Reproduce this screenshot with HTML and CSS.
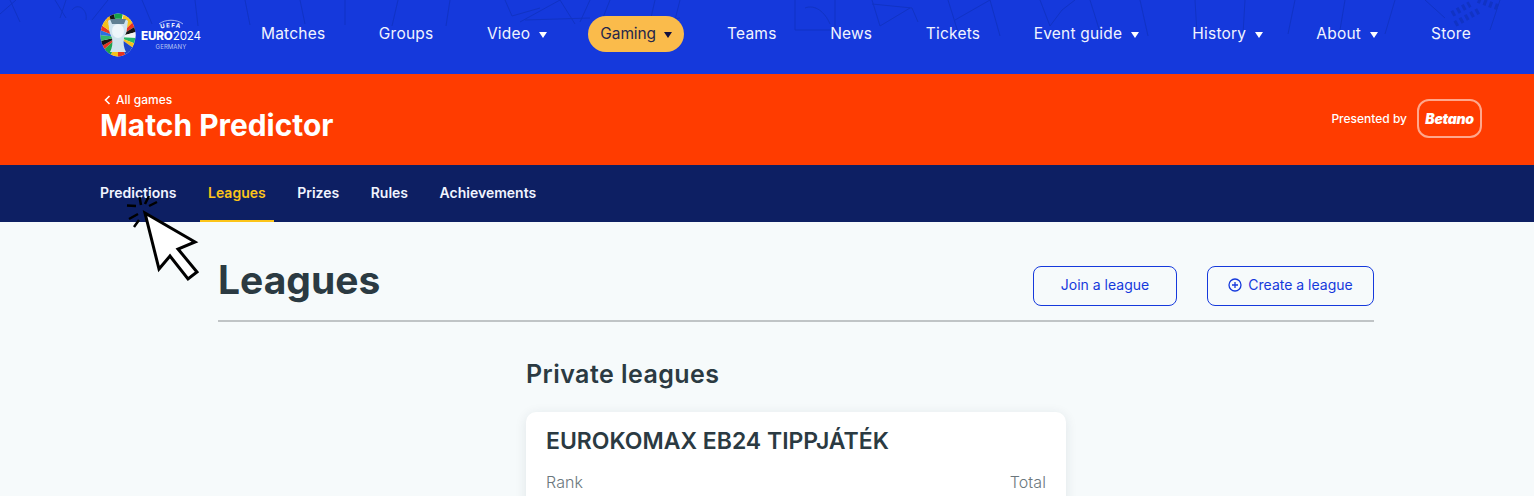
FILE: index.html
```html
<!DOCTYPE html>
<html lang="en">
<head>
<meta charset="utf-8">
<title>Leagues - Match Predictor</title>
<link rel="stylesheet" href="styles.css">
</head>
<body>
<header class="topbar">
  <svg class="pattern" width="1534" height="74" viewBox="0 0 1534 74" fill="none" stroke="#1133c4" stroke-width="1" aria-hidden="true">
    <path d="M0 14 16 0M10 0 20 22M55 0 66 18M66 0 60 18M72 10C78 2 88 10 86 20M108 0 92 20M142 0 152 24M195 0 198 26M245 0 250 25M300 0 305 24M345 0 345 25M398 0 392 26M450 0 446 26M505 0 512 16 540 8M520 22 560 0M560 0 575 24M525 20 590 18M590 0 580 22M610 0 600 25M655 0 650 22 680 18M680 0 674 24"/>
    <path d="M795 0V30M795 30H835V0M805 8C815 4 825 12 830 24M872 0 880 26 910 8M872 4 912 8 918 22M948 0 958 32M955 20 990 0 1000 36M1040 0 1050 26 1062 10 1075 0M1090 0 1100 32M1140 0 1148 36M1195 0 1197 34M1245 0 1243 34M1295 0 1288 34M1345 0 1340 30M1395 0 1385 34M1425 0 1445 18M1500 0 1490 30"/>
    <path d="M1452 14 1470 4M1455 24 1480 10M1478 0 1500 8" stroke-width="6" stroke-dasharray="3 3"/>
  </svg>
  <nav class="mainnav">
    <a class="logo" href="#">
      <svg class="logo-mark" width="36" height="44" viewBox="0 0 36 44" aria-hidden="true">
        <defs><clipPath id="oval"><ellipse cx="18" cy="22" rx="17.500" ry="21.500"/></clipPath></defs>
        <g clip-path="url(#oval)">
          <rect width="36" height="44" fill="#f4f4f4"/>
          <path d="M18 24 0 0H10Z" fill="#f4b01b"/>
          <path d="M18 24 8 0H14Z" fill="#161616"/>
          <path d="M18 24 14 0H23Z" fill="#17a24a"/>
          <path d="M18 24 24 0H36V6Z" fill="#f6c21b"/>
          <path d="M18 24 36 6V13Z" fill="#e53420"/>
          <path d="M18 24 36 13V19Z" fill="#161616"/>
          <path d="M18 24 36 19V25Z" fill="#f4f4f4"/>
          <path d="M18 24 36 25V31Z" fill="#27b86a"/>
          <path d="M18 24 36 31V37Z" fill="#f6c21b"/>
          <path d="M18 24 36 37V44H26Z" fill="#1f48c9"/>
          <path d="M18 24 26 44H18Z" fill="#e53420"/>
          <path d="M18 24 18 44H10Z" fill="#f6c21b"/>
          <path d="M18 24 10 44H0V40Z" fill="#1fa34f"/>
          <path d="M18 24 0 40V34Z" fill="#e53420"/>
          <path d="M18 24 0 34V28Z" fill="#161616"/>
          <path d="M18 24 0 28V22Z" fill="#36b56a"/>
          <path d="M18 24 0 22V17Z" fill="#2b6fe0"/>
          <path d="M18 24 0 17V11Z" fill="#e53420"/>
          <path d="M18 24 0 11V0Z" fill="#f3c01a"/>
          <path d="M8 8C10 5 26 5 28 8L27 15C27 20 25 22 24 25 23 31 24 35 26 39H10C12 35 13 31 12 25 11 22 9 20 9 15Z" fill="#cfe3ee"/>
          <path d="M10 6H26L24 11H12Z" fill="#5f7f92"/>
          <ellipse cx="18" cy="18" rx="6" ry="7" fill="#eef6fa"/>
        </g>
      </svg>
      <span class="logo-text">
        <svg class="logo-uefa" width="30" height="11" viewBox="0 0 30 11" aria-hidden="true">
          <path id="uefa-arc" d="M3 10.500C8 7.500 22 7.500 27 10.500" fill="none"/>
          <path d="M3 5C9 0 21 0 27 5" fill="none" stroke="#dfe6ff" stroke-width=".7"/>
          <text class="logo-uefa-text"><textPath href="#uefa-arc" startOffset="50%" text-anchor="middle">UEFA</textPath></text>
        </svg>
        <span class="logo-euro"><b>EURO</b>2024</span>
        <span class="logo-ger">GERMANY</span>
      </span>
    </a>
    <ul class="navlist">
      <li><a class="navitem" href="#">Matches</a></li>
      <li><a class="navitem" href="#">Groups</a></li>
      <li><a class="navitem" href="#">Video<i class="caret"></i></a></li>
      <li><a class="navitem pill" href="#">Gaming<i class="caret"></i></a></li>
      <li><a class="navitem" href="#">Teams</a></li>
      <li><a class="navitem" href="#">News</a></li>
      <li><a class="navitem" href="#">Tickets</a></li>
      <li><a class="navitem" href="#">Event guide<i class="caret"></i></a></li>
      <li><a class="navitem" href="#">History<i class="caret"></i></a></li>
      <li><a class="navitem" href="#">About<i class="caret"></i></a></li>
      <li><a class="navitem" href="#">Store</a></li>
    </ul>
  </nav>
</header>

<section class="hero">
  <div class="hero-left">
    <a class="back" href="#">
      <svg width="7" height="10" viewBox="0 0 7 10" fill="none" stroke="#fff" stroke-width="1.600" aria-hidden="true"><path d="M5.500 1 1.500 5l4 4"/></svg>
      All games
    </a>
    <h1 class="hero-title">Match Predictor</h1>
  </div>
  <div class="sponsor">
    <span class="sponsor-label">Presented by</span>
    <span class="sponsor-badge">Betano</span>
  </div>
</section>

<nav class="subnav">
  <a class="subitem" href="#">Predictions</a>
  <a class="subitem active" href="#">Leagues</a>
  <a class="subitem" href="#">Prizes</a>
  <a class="subitem" href="#">Rules</a>
  <a class="subitem" href="#">Achievements</a>
</nav>

<main class="content">
  <div class="pagehead">
    <h2 class="pagetitle">Leagues</h2>
    <div class="actions">
      <a class="btn btn-join" href="#">Join a league</a>
      <a class="btn btn-create" href="#">
        <svg width="14" height="14" viewBox="0 0 14 14" fill="none" stroke="#1539dc" stroke-width="1.300" aria-hidden="true"><circle cx="7" cy="7" r="6"/><path d="M7 4v6M4 7h6"/></svg>
        Create a league
      </a>
    </div>
  </div>
  <section class="private">
    <h3 class="private-title">Private leagues</h3>
    <article class="card">
      <h4 class="card-title">EUROKOMAX EB24 TIPPJÁTÉK</h4>
      <div class="card-row"><span>Rank</span><span>Total</span></div>
    </article>
  </section>
</main>

<svg class="cursor" width="90" height="90" viewBox="0 0 90 90" aria-hidden="true">
  <path d="M20 17 70 46 53 53 72 76 63 83 45 60 34 73Z" fill="#fff" stroke="#000" stroke-width="3" stroke-linejoin="miter"/>
  <path d="M2 9.500 11 10M4 23 13 18M9 31 14 24M14.500 1 16 9M24 0 20 8M32 6 24 10" fill="none" stroke="#000" stroke-width="2.500"/>
</svg>
</body>
</html>
```
FILE: styles.css
```css
* { box-sizing: border-box; }
html, body { margin: 0; padding: 0; }
body {
  position: relative;
  height: 496px;
  overflow: hidden;
  background: #f6fafb;
  font-family: "Inter", "Liberation Sans", sans-serif;
  color: #2b3a42;
}
a { color: inherit; text-decoration: none; }
h1, h2, h3, h4 { margin: 0; }

.topbar {
  position: relative;
  height: 74px;
  background: #1539dc;
  overflow: hidden;
}
.pattern { position: absolute; left: 0; top: 0; }
.mainnav {
  position: relative;
  display: flex;
  padding: 13px 0 0 100px;
}
.logo { display: flex; width: 149px; height: 44px; }
.logo-mark { flex: none; }
.logo-text {
  display: flex;
  flex-direction: column;
  align-items: center;
  margin-left: 5px;
  width: 60px;
  color: #fff;
  padding-top: 6px;
}
.logo-uefa { display: block; flex: none; overflow: visible; }
.logo-uefa-text { font-size: 6px; font-weight: 700; letter-spacing: 1.200px; fill: #fff; }
.logo-euro { font-size: 11.700px; line-height: 13px; font-weight: 400; white-space: nowrap; letter-spacing: -.2px; }
.logo-euro b { font-weight: 800; }
.logo-ger { font-size: 6px; line-height: 7px; color: #b9c6f2; letter-spacing: .1px; }

.navlist {
  display: flex;
  list-style: none;
  margin: 3px 0 0;
  padding: 0;
  gap: 29.600px;
}
.navitem {
  display: flex;
  align-items: center;
  height: 36px;
  padding: 0 12px 1px;
  color: #f1f4ff;
  font-size: 15.500px;
  font-weight: 400;
  letter-spacing: .2px;
  white-space: nowrap;
}
.caret {
  width: 0;
  height: 0;
  margin: 3px 0 0 8.500px;
  border-left: 4.500px solid transparent;
  border-right: 4.500px solid transparent;
  border-top: 6px solid #fff;
}
.pill {
  margin-right: 1px;
  background: #fabb4b;
  border-radius: 18px;
  color: #26264a;
  letter-spacing: -.1px;
}
.pill .caret { border-top-color: #10103f; }

.hero {
  display: flex;
  justify-content: space-between;
  height: 91px;
  padding: 0 52px 0 100px;
  background: #ff3c00;
  color: #fff;
}
.hero-left { padding-top: 18px; }
.back {
  display: flex;
  align-items: center;
  gap: 5px;
  padding-left: 4px;
  font-size: 12px;
  font-weight: 500;
  line-height: 16px;
}
.hero-title { font-size: 29.900px; line-height: 34px; font-weight: 700; }
.sponsor { display: flex; align-items: center; gap: 10px; padding-bottom: 2px; }
.sponsor-label { font-size: 12px; font-weight: 500; }
.sponsor-badge {
  display: flex;
  align-items: center;
  justify-content: center;
  width: 65px;
  height: 39px;
  border: 2px solid rgba(255, 255, 255, .55);
  border-radius: 12px;
  font-size: 14px;
  font-weight: 900;
  font-style: italic;
  letter-spacing: -.3px;
}

.subnav {
  display: flex;
  height: 57px;
  padding-left: 92px;
  gap: 15.500px;
  background: #0d1f63;
}
.subitem {
  display: flex;
  align-items: center;
  padding: 0 8px;
  border-bottom: 2px solid transparent;
  color: #f1f4ff;
  font-size: 14px;
  font-weight: 600;
}
.subitem.active { color: #fcc419; border-bottom-color: #fcc419; }

.content { width: 1156px; margin-left: 218px; }
.pagehead {
  display: flex;
  justify-content: space-between;
  height: 100px;
  border-bottom: 2px solid #c0c4c6;
}
.pagetitle { margin-top: 34px; font-size: 39px; line-height: 48px; font-weight: 700; }
.actions { display: flex; gap: 30px; margin-top: 44px; }
.btn {
  display: flex;
  align-items: center;
  justify-content: center;
  gap: 6px;
  height: 40px;
  padding-bottom: 3px;
  border: 1px solid #1539dc;
  border-radius: 8px;
  color: #1539dc;
  font-size: 14px;
  font-weight: 400;
}
.btn-join { width: 144px; }
.btn-create { width: 167px; }

.private { width: 540px; margin: 0 auto; padding-top: 36px; }
.private-title { font-size: 25px; line-height: 32px; font-weight: 600; letter-spacing: .45px; }
.card {
  margin-top: 22px;
  height: 120px;
  padding: 15px 20px;
  background: #fff;
  border-radius: 10px;
  box-shadow: 0 2px 12px rgba(30, 50, 70, .1);
}
.card-title { font-size: 23px; line-height: 28px; font-weight: 600; }
.card-row {
  display: flex;
  justify-content: space-between;
  margin-top: 16px;
  color: #6b777d;
  font-size: 16px;
  line-height: 22px;
  font-weight: 300;
  letter-spacing: .1px;
}

.cursor { position: absolute; left: 125px; top: 196px; }
```
